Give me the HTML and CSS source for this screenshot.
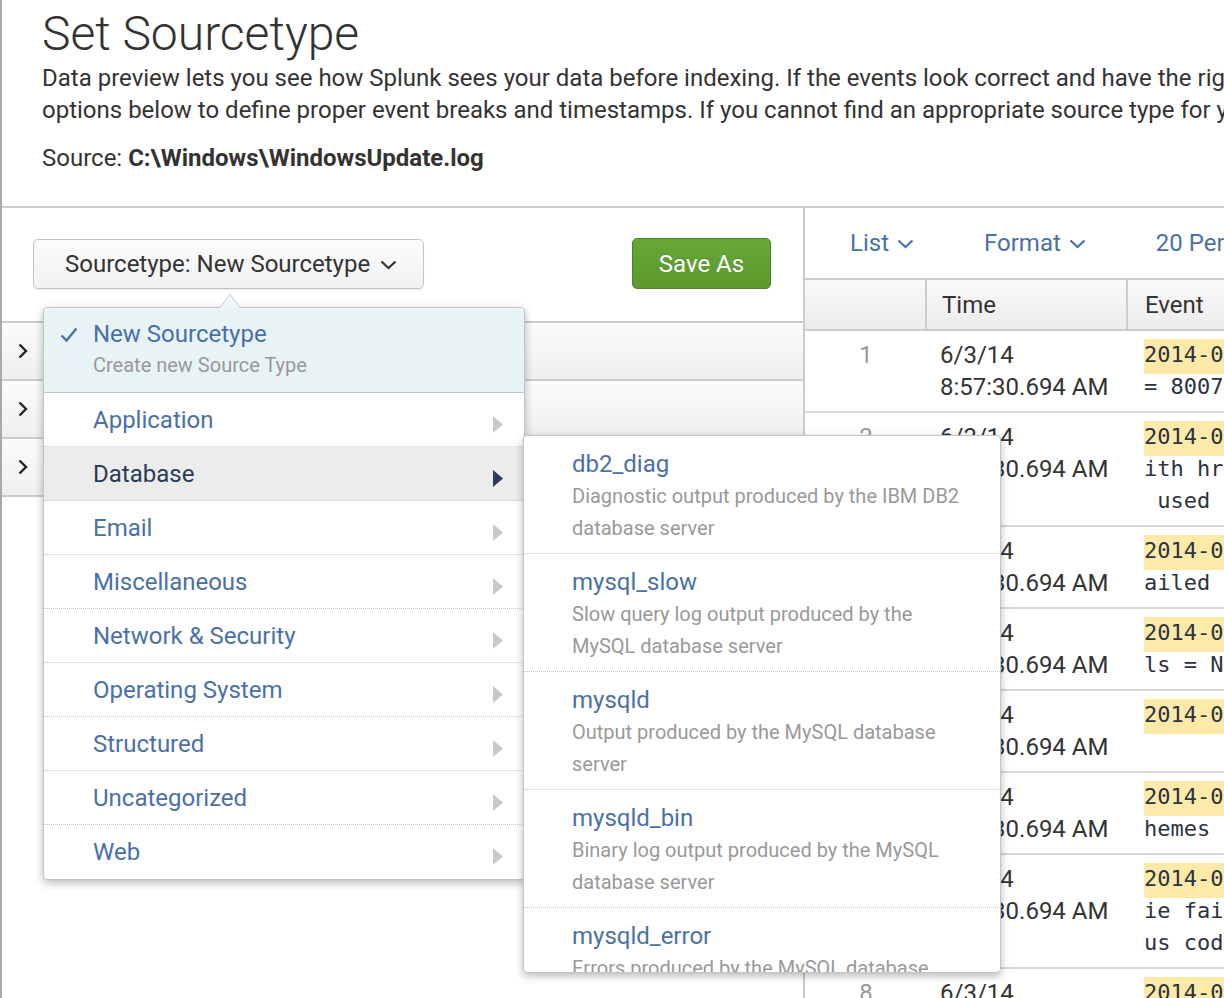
FILE: index.html
```html
<!DOCTYPE html>
<html lang="en">
<head>
<meta charset="utf-8">
<title>Set Sourcetype</title>
<link rel="stylesheet" href="styles.css">
</head>
<body>
<div class="app">
  <header class="intro">
    <h1 class="title">Set Sourcetype</h1>
    <p class="lead">Data preview lets you see how Splunk sees your data before indexing. If the events look correct and have the right timestamps, click "Next" to proceed. If not, use the<br>options below to define proper event breaks and timestamps. If you cannot find an appropriate source type for your data, create a new one by clicking "Save As".</p>
    <p class="source">Source: <b>C:\Windows\WindowsUpdate.log</b></p>
  </header>

  <div class="workspace">
    <section class="left-pane">
      <div class="left-toolbar">
        <div class="st-picker">
          <button class="btn st-btn">Sourcetype: New Sourcetype
            <svg class="chev-down" width="17" height="10" viewBox="0 0 17 10"><path d="M1.5 1.5 L8.5 8 L15.5 1.5" fill="none" stroke="#333" stroke-width="2.2"/></svg>
          </button>

          <div class="st-menu">
            <span class="st-pointer"></span>
            <div class="st-current">
              <svg class="check" width="18" height="16" viewBox="0 0 18 16"><path d="M1.5 8.5 L6.5 13.5 L16.5 1.5" fill="none" stroke="#4a70a8" stroke-width="2.4"/></svg>
              <div class="st-current-text">
                <div class="st-name">New Sourcetype</div>
                <div class="st-desc">Create new Source Type</div>
              </div>
            </div>
            <ul class="cat-list">
              <li class="cat">Application<svg class="tri" width="10" height="17" viewBox="0 0 10 17"><polygon points="0,0 10,8.5 0,17"/></svg></li>
              <li class="cat is-open">Database<svg class="tri" width="10" height="17" viewBox="0 0 10 17"><polygon points="0,0 10,8.5 0,17"/></svg></li>
              <li class="cat">Email<svg class="tri" width="10" height="17" viewBox="0 0 10 17"><polygon points="0,0 10,8.5 0,17"/></svg></li>
              <li class="cat">Miscellaneous<svg class="tri" width="10" height="17" viewBox="0 0 10 17"><polygon points="0,0 10,8.5 0,17"/></svg></li>
              <li class="cat">Network &amp; Security<svg class="tri" width="10" height="17" viewBox="0 0 10 17"><polygon points="0,0 10,8.5 0,17"/></svg></li>
              <li class="cat">Operating System<svg class="tri" width="10" height="17" viewBox="0 0 10 17"><polygon points="0,0 10,8.5 0,17"/></svg></li>
              <li class="cat">Structured<svg class="tri" width="10" height="17" viewBox="0 0 10 17"><polygon points="0,0 10,8.5 0,17"/></svg></li>
              <li class="cat">Uncategorized<svg class="tri" width="10" height="17" viewBox="0 0 10 17"><polygon points="0,0 10,8.5 0,17"/></svg></li>
              <li class="cat">Web<svg class="tri" width="10" height="17" viewBox="0 0 10 17"><polygon points="0,0 10,8.5 0,17"/></svg></li>
            </ul>

            <div class="sub-menu">
              <div class="sub-item">
                <div class="sub-name">db2_diag</div>
                <div class="sub-desc">Diagnostic output produced by the IBM DB2 database server</div>
              </div>
              <div class="sub-item">
                <div class="sub-name">mysql_slow</div>
                <div class="sub-desc">Slow query log output produced by the MySQL database server</div>
              </div>
              <div class="sub-item">
                <div class="sub-name">mysqld</div>
                <div class="sub-desc">Output produced by the MySQL database server</div>
              </div>
              <div class="sub-item">
                <div class="sub-name">mysqld_bin</div>
                <div class="sub-desc">Binary log output produced by the MySQL database server</div>
              </div>
              <div class="sub-item">
                <div class="sub-name">mysqld_error</div>
                <div class="sub-desc">Errors produced by the MySQL database server</div>
              </div>
            </div>
          </div>
        </div>
        <button class="btn btn-save">Save As</button>
      </div>

      <div class="settings">
        <div class="setting-row"><svg class="chev-right" width="10" height="16" viewBox="0 0 10 16"><path d="M1.5 1.5 L8 8 L1.5 14.5" fill="none" stroke="#222" stroke-width="2.4"/></svg><span>Event Breaks</span></div>
        <div class="setting-row"><svg class="chev-right" width="10" height="16" viewBox="0 0 10 16"><path d="M1.5 1.5 L8 8 L1.5 14.5" fill="none" stroke="#222" stroke-width="2.4"/></svg><span>Timestamp</span></div>
        <div class="setting-row"><svg class="chev-right" width="10" height="16" viewBox="0 0 10 16"><path d="M1.5 1.5 L8 8 L1.5 14.5" fill="none" stroke="#222" stroke-width="2.4"/></svg><span>Advanced</span></div>
      </div>
    </section>

    <section class="right-pane">
      <div class="right-toolbar">
        <span class="tool-link">List<svg width="17" height="10" viewBox="0 0 17 10"><path d="M1.5 1.5 L8.5 8 L15.5 1.5" fill="none" stroke="#4a70a8" stroke-width="2.2"/></svg></span>
        <span class="tool-link">Format<svg width="17" height="10" viewBox="0 0 17 10"><path d="M1.5 1.5 L8.5 8 L15.5 1.5" fill="none" stroke="#4a70a8" stroke-width="2.2"/></svg></span>
        <span class="tool-link">20 Per Page<svg width="17" height="10" viewBox="0 0 17 10"><path d="M1.5 1.5 L8.5 8 L15.5 1.5" fill="none" stroke="#4a70a8" stroke-width="2.2"/></svg></span>
      </div>

      <div class="events">
        <div class="ev-head">
          <div class="c-num"></div>
          <div class="c-time">Time</div>
          <div class="c-event">Event</div>
        </div>

        <div class="ev-row">
          <div class="c-num">1</div>
          <div class="c-time">6/3/14<br>8:57:30.694 AM</div>
          <div class="c-event"><span class="ts">2014-06-03	08:57:30:694</span>
= 80070422</div>
        </div>
        <div class="ev-row">
          <div class="c-num">2</div>
          <div class="c-time">6/3/14<br>8:57:30.694 AM</div>
          <div class="c-event"><span class="ts">2014-06-03	08:57:30:694</span>
ith hr = 0x80070422
 used by another</div>
        </div>
        <div class="ev-row">
          <div class="c-num">3</div>
          <div class="c-time">6/3/14<br>8:57:30.694 AM</div>
          <div class="c-event"><span class="ts">2014-06-03	08:57:30:694</span>
ailed to connect</div>
        </div>
        <div class="ev-row">
          <div class="c-num">4</div>
          <div class="c-time">6/3/14<br>8:57:30.694 AM</div>
          <div class="c-event"><span class="ts">2014-06-03	08:57:30:694</span>
ls = No</div>
        </div>
        <div class="ev-row">
          <div class="c-num">5</div>
          <div class="c-time">6/3/14<br>8:57:30.694 AM</div>
          <div class="c-event"><span class="ts">2014-06-03	08:57:30:694</span></div>
        </div>
        <div class="ev-row">
          <div class="c-num">6</div>
          <div class="c-time">6/3/14<br>8:57:30.694 AM</div>
          <div class="c-event"><span class="ts">2014-06-03	08:57:30:694</span>
hemes service</div>
        </div>
        <div class="ev-row">
          <div class="c-num">7</div>
          <div class="c-time">6/3/14<br>8:57:30.694 AM</div>
          <div class="c-event"><span class="ts">2014-06-03	08:57:30:694</span>
ie failed with
us code 0x80070422</div>
        </div>
        <div class="ev-row">
          <div class="c-num">8</div>
          <div class="c-time">6/3/14<br>8:57:30.694 AM</div>
          <div class="c-event"><span class="ts">2014-06-03	08:57:30:694</span>
</div>
        </div>
      </div>
    </section>
  </div>
</div>
</body>
</html>
```

FILE: styles.css
```css
html, body {
  margin: 0;
  padding: 0;
  overflow: hidden;
  background: #fff;
}

.app {
  width: 1224px;
  height: 998px;
  overflow: hidden;
  box-sizing: border-box;
  border-left: 2px solid #a9a9a9;
  font-family: Roboto, "Liberation Sans", Arial, sans-serif;
  color: #333;
  background: #fff;
}

/* ---------- header ---------- */
.intro {
  padding: 6px 0 32px 40px;
  white-space: nowrap;
}

.title {
  margin: 0;
  font-size: 48px;
  font-weight: 300;
  line-height: 56px;
  color: #333;
}

.lead {
  margin: 0;
  font-size: 24px;
  line-height: 32px;
}

.source {
  margin: 16px 0 0;
  font-size: 24px;
  line-height: 32px;
}

.source b {
  font-weight: 700;
}

/* ---------- workspace ---------- */
.workspace {
  display: grid;
  grid-template-columns: 803px 1fr;
  border-top: 2px solid #ccc;
  height: 800px;
}

.left-pane {
  border-right: 2px solid #ccc;
  box-sizing: border-box;
  position: relative;
}

.left-toolbar {
  height: 113px;
  box-sizing: border-box;
  padding: 31px 32px 0 31px;
  display: flex;
  justify-content: space-between;
  align-items: flex-start;
}

.btn {
  font-family: inherit;
  font-size: 24px;
  cursor: pointer;
  border-radius: 5px;
}

.st-picker {
  position: relative;
  z-index: 5;
}

.st-btn {
  height: 50px;
  padding: 0 26px 0 31px;
  display: flex;
  align-items: center;
  gap: 10px;
  color: #333;
  background: linear-gradient(#fbfbfb, #f2f2f2);
  border: 1px solid #c4c4c4;
  box-shadow: 0 1px 1px rgba(0, 0, 0, 0.08);
}

.chev-down {
  margin-top: 2px;
}

.btn-save {
  margin-top: -1px;
  height: 51px;
  width: 139px;
  color: #fff;
  background: linear-gradient(#68a83b, #5a9a2d);
  border: 1px solid #4b8426;
  text-shadow: 0 -1px 0 rgba(0, 0, 0, 0.15);
}

/* settings accordion rows behind the menu */
.settings {
  border-bottom: 2px solid #ccc;
}

.setting-row {
  height: 56px;
  border-top: 2px solid #ccc;
  background: linear-gradient(#fbfbfb, #efefef);
  display: flex;
  align-items: center;
  gap: 20px;
  padding-left: 16px;
  font-size: 22px;
  color: #333;
}

/* ---------- dropdown menu ---------- */
.st-menu {
  position: absolute;
  left: 10px;
  top: 68px;
  width: 482px;
  box-sizing: border-box;
  background: #fff;
  border: 1px solid #c4c4c4;
  border-radius: 4px;
  box-shadow: 0 3px 8px rgba(0, 0, 0, 0.28);
}

.st-pointer {
  position: absolute;
  left: 175px;
  top: -14px;
  width: 0;
  height: 0;
  border-left: 11px solid transparent;
  border-right: 11px solid transparent;
  border-bottom: 14px solid #c4c4c4;
}

.st-pointer::after {
  content: "";
  position: absolute;
  left: -10px;
  top: 1px;
  border-left: 10px solid transparent;
  border-right: 10px solid transparent;
  border-bottom: 13px solid #edf5f8;
}

.st-current {
  background: #e8f3f6;
  border-bottom: 1px solid #c4c4c4;
  border-radius: 4px 4px 0 0;
  height: 85px;
  box-sizing: border-box;
  padding: 10px 0 0 16px;
  display: flex;
  align-items: flex-start;
  gap: 15px;
}

.check {
  margin-top: 9px;
}

.st-name {
  font-size: 24px;
  line-height: 32px;
  color: #4a70a8;
}

.st-desc {
  font-size: 20px;
  line-height: 30px;
  color: #999;
}

.cat-list {
  list-style: none;
  margin: 0;
  padding: 0;
}

.cat {
  height: 54px;
  box-sizing: border-box;
  border-bottom: 1px dotted #c8c8c8;
  padding: 0 21px 0 49px;
  display: flex;
  align-items: center;
  justify-content: space-between;
  font-size: 24px;
  color: #4a70a8;
}

.cat:last-child {
  border-bottom: 0;
  border-radius: 0 0 4px 4px;
}

.tri {
  fill: #c9c9c9;
  margin-top: 9px;
}

.cat.is-open {
  background: #ececec;
  color: #2b3a55;
}

.cat.is-open .tri {
  fill: #2d3c5a;
}

/* ---------- sub menu ---------- */
.sub-menu {
  position: absolute;
  left: 479px;
  top: 127px;
  width: 478px;
  height: 538px;
  overflow: hidden;
  box-sizing: border-box;
  background: #fff;
  border: 1px solid #c4c4c4;
  border-radius: 4px;
  box-shadow: 0 3px 8px rgba(0, 0, 0, 0.28);
}

.sub-item {
  height: 118px;
  box-sizing: border-box;
  padding: 12px 30px 0 48px;
  border-bottom: 1px dotted #c8c8c8;
}

.sub-name {
  font-size: 24px;
  line-height: 32px;
  color: #4a70a8;
}

.sub-desc {
  font-size: 20px;
  line-height: 32px;
  color: #999;
}

/* ---------- right pane ---------- */
.right-pane {
  overflow: hidden;
  white-space: nowrap;
}

.right-toolbar {
  height: 72px;
  box-sizing: border-box;
  border-bottom: 2px solid #ccc;
  padding-left: 45px;
  display: flex;
  align-items: center;
  gap: 70px;
}

.tool-link {
  font-size: 24px;
  color: #4a70a8;
  display: inline-flex;
  align-items: center;
  gap: 8px;
  flex: none;
}

.tool-link svg {
  margin-top: 2px;
}

.ev-head,
.ev-row {
  display: flex;
}

.ev-head {
  height: 51px;
  box-sizing: border-box;
  background: linear-gradient(#f9f9f9, #ececec);
  border-bottom: 2px solid #ccc;
  align-items: stretch;
  font-size: 24px;
}

.c-num {
  width: 122px;
  flex: none;
  text-align: center;
  box-sizing: border-box;
}

.c-time {
  width: 201px;
  flex: none;
  box-sizing: border-box;
  padding-left: 13px;
}

.c-event {
  flex: 1;
  min-width: 0;
  overflow: hidden;
  padding-left: 16px;
}

.ev-head .c-num,
.ev-head .c-time {
  border-right: 2px solid #ccc;
}

.ev-head .c-time {
  display: flex;
  align-items: center;
  padding-left: 15px;
}

.ev-head .c-event {
  display: flex;
  align-items: center;
  padding-left: 17px;
}

.ev-row {
  border-bottom: 2px solid #d8d8d8;
  padding: 8px 0;
  font-size: 24px;
  line-height: 32px;
}

.ev-row .c-num {
  color: #999;
}

.ev-row .c-event {
  font-family: "DejaVu Sans Mono", "Liberation Mono", monospace;
  font-size: 22px;
  white-space: pre;
  color: #2b3340;
}

.ts {
  background: #fde9a8;
  padding: 7px 0;
}
```
